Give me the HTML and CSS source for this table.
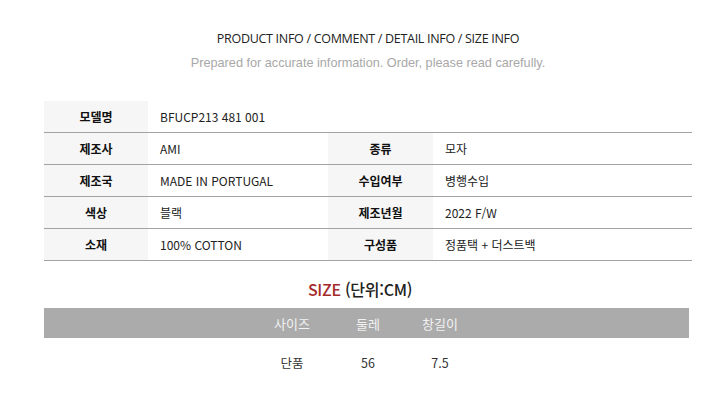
FILE: index.html
```html
<!DOCTYPE html>
<html lang="ko">
<head>
<meta charset="utf-8">
<link rel="stylesheet" href="styles.css">
</head>
<body>
<div class="page">
  <h1 class="title">PRODUCT INFO / COMMENT / DETAIL INFO / SIZE INFO</h1>
  <p class="subtitle">Prepared for accurate information. Order, please read carefully.</p>

  <div class="info">
    <div class="row">
      <div class="label">모델명</div>
      <div class="value wide">BFUCP213 481 001</div>
    </div>
    <div class="row">
      <div class="label">제조사</div>
      <div class="value">AMI</div>
      <div class="label label2">종류</div>
      <div class="value">모자</div>
    </div>
    <div class="row">
      <div class="label">제조국</div>
      <div class="value">MADE IN PORTUGAL</div>
      <div class="label label2">수입여부</div>
      <div class="value">병행수입</div>
    </div>
    <div class="row">
      <div class="label">색상</div>
      <div class="value">블랙</div>
      <div class="label label2">제조년월</div>
      <div class="value">2022 F/W</div>
    </div>
    <div class="row">
      <div class="label">소재</div>
      <div class="value">100% COTTON</div>
      <div class="label label2">구성품</div>
      <div class="value">정품택 + 더스트백</div>
    </div>
  </div>

  <h2 class="size-title"><span class="red">SIZE</span> (단위:CM)</h2>
  <div class="size-table">
    <div class="size-head">
      <span>사이즈</span><span>둘레</span><span>창길이</span>
    </div>
    <div class="size-row">
      <span>단품</span><span>56</span><span>7.5</span>
    </div>
  </div>
</div>
</body>
</html>
```
FILE: styles.css
```css
* { box-sizing: border-box; }
html, body { margin: 0; padding: 0; background: #fff; }
body { font-family: "Noto Sans", "Noto Sans CJK KR", sans-serif; color: #222; }
.page { width: 720px; padding: 30px 28px 0 44px; }
.title {
  margin: 0;
  width: 648px;
  text-align: center;
  font-family: "Open Sans", "Noto Sans CJK KR", sans-serif;
  font-size: 12.5px;
  font-weight: 400;
  letter-spacing: -0.3px;
  line-height: 18px;
  color: #222;
}
.subtitle {
  margin: 7px 0 0 0;
  width: 648px;
  text-align: center;
  font-family: "Liberation Sans", Arial, sans-serif;
  font-size: 12.7px;
  line-height: 16px;
  color: #a8a8a8;
}
.info { width: 648px; margin-top: 30px; }
.row {
  display: grid;
  grid-template-columns: 104px 180px 105px 1fr;
  height: 32px;
  border-bottom: 1px solid #a3a3a3;
}
.label {
  background: #f6f6f6;
  display: flex; align-items: center; justify-content: center;
  font-family: "Noto Sans CJK KR", sans-serif;
  font-weight: 700;
  font-size: 12px;
  color: #111;
}
.value {
  display: flex; align-items: center;
  padding-left: 12px;
  font-family: "Noto Sans CJK KR", sans-serif;
  font-size: 12px;
  color: #222;
}
.value.wide { grid-column: 2 / 5; }
.size-title {
  margin: 16px 0 0 0;
  width: 648px;
  padding-right: 16px;
  text-align: center;
  font-family: "Noto Sans CJK KR", sans-serif;
  font-weight: 500;
  font-size: 16px;
  line-height: 24px;
  color: #222;
  letter-spacing: -0.3px;
}
.red { color: #a52a2a; }
.size-table { width: 645px; margin-top: 7px; }
.size-head, .size-row {
  display: grid;
  grid-template-columns: 78px 74px 70px;
  justify-content: center;
  padding-right: 5px;
  text-align: center;
  font-family: "Noto Sans CJK KR", sans-serif;
  font-size: 13px;
}
.size-head {
  background: #ababab;
  color: #f2f2f2;
  height: 30px;
  align-items: center;
}
.size-row {
  height: 48px;
  align-items: center;
  color: #333;
  font-size: 12.5px;
}
```
